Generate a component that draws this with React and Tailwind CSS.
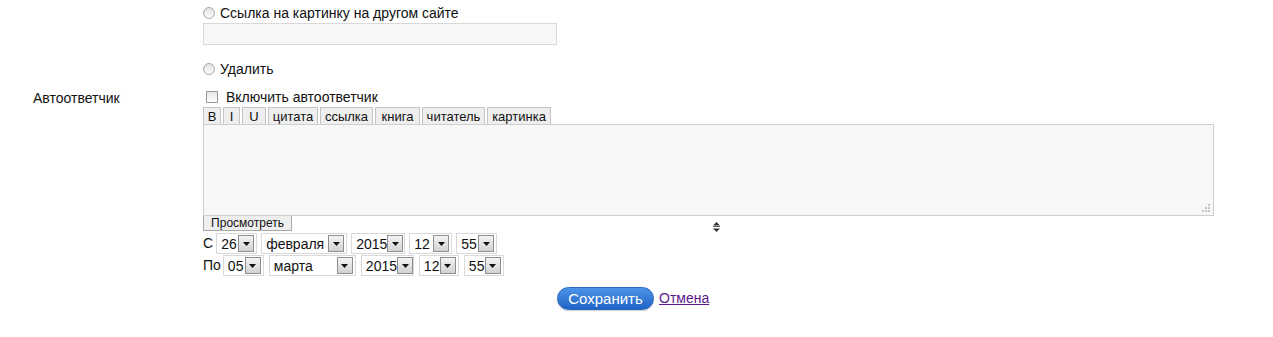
import React from 'react'

const Radio = () => (
    <span className="inline-block w-[12px] h-[12px] rounded-full border border-[#a8a8a8] bg-gradient-to-b from-[#e2e2e2] to-[#fdfdfd] mr-[5px] shrink-0" />
)

const Select = ({ value, width }) => (
    <span className="inline-flex items-center justify-between h-[21px] border border-[#d9d9d9] bg-white pl-[4px] pr-[2px] shrink-0" style={{ width }}>
        <span className="text-[14px] text-[#111] leading-none">{value}</span>
        <span className="w-[16px] h-[17px] shrink-0 border border-[#8e8e8e] bg-gradient-to-b from-[#f4f4f4] to-[#d2d2d2] flex items-center justify-center">
            <svg width="7" height="4" viewBox="0 0 7 4"><path d="M0 0h7L3.5 4z" fill="#111" /></svg>
        </span>
    </span>
)

const ToolBtn = ({ children, w }) => (
    <span className="h-[18px] border border-[#c4c4c4] bg-[#eeeeee] text-[13px] text-[#111] flex items-center justify-center leading-none shrink-0" style={{ width: w }}>
        {children}
    </span>
)

const App = () => {
    const tools = [
        ['B', 18], ['I', 17], ['U', 24], ['цитата', 50], ['ссылка', 53],
        ['книга', 45], ['читатель', 63], ['картинка', 64],
    ]
    return (
        <div className="w-[1273px] h-[337px] bg-white text-[14px] text-[#111] font-['Liberation_Sans',Arial,sans-serif] relative overflow-hidden">
            <div className="pl-[203px] pt-[5px]">
                <div className="flex items-center h-[16px]">
                    <Radio />
                    <span>Ссылка на картинку на другом сайте</span>
                </div>
                <div className="mt-[2px] w-[354px] h-[22px] border border-[#d9d9d9] bg-[#f7f7f7]" />
                <div className="flex items-center h-[16px] mt-[16px]">
                    <Radio />
                    <span>Удалить</span>
                </div>
            </div>

            {/* Автоответчик */}
            <div className="flex mt-[12px]">
                <div className="w-[203px] pl-[33px] text-[14px] leading-[18px]">Автоответчик</div>
                <div className="flex-1">
                    <div className="flex items-center h-[16px] pl-[3px]">
                        <span className="inline-block w-[12px] h-[12px] border border-[#9a9a9a] bg-gradient-to-b from-[#e8e8e8] to-[#fbfbfb] mr-[8px]" />
                        <span>Включить автоответчик</span>
                    </div>
                    <div className="flex gap-[2px] mt-[2px]">
                        {tools.map(([t, w]) => (
                            <ToolBtn key={t} w={w}>{t}</ToolBtn>
                        ))}
                    </div>
                    <div className="relative w-[1011px] h-[92px] border border-[#cfcfcf] bg-[#f8f8f8] -mt-[1px]">
                        <svg className="absolute right-[2px] bottom-[2px]" width="10" height="10" viewBox="0 0 10 10">
                            <rect x="7" y="1" width="2" height="2" fill="#c4c4c4" />
                            <rect x="4" y="4" width="2" height="2" fill="#c4c4c4" />
                            <rect x="7" y="4" width="2" height="2" fill="#c4c4c4" />
                            <rect x="1" y="7" width="2" height="2" fill="#c4c4c4" />
                            <rect x="4" y="7" width="2" height="2" fill="#c4c4c4" />
                            <rect x="7" y="7" width="2" height="2" fill="#c4c4c4" />
                        </svg>
                    </div>
                    <div className="flex items-start -mt-[2px]">
                        <span className="h-[17px] w-[89px] border border-[#a9a9a9] bg-[#eeeeee] text-[12px] flex items-center justify-center leading-none">Просмотреть</span>
                        <svg className="ml-[421px] mt-[8px]" width="7" height="10" viewBox="0 0 7 10">
                            <path d="M3.5 0L7 3.5H0z" fill="#333" />
                            <path d="M0 6.5h7L3.5 10z" fill="#333" />
                            <rect x="0" y="4" width="7" height="0.8" fill="#333" />
                        </svg>
                    </div>
                    <div className="flex items-center gap-[4px] mt-[1px] h-[21px]">
                        <span className="text-[14px] mr-[-1px]">С</span>
                        <Select value="26" width={41} />
                        <Select value="февраля" width={86} />
                        <Select value="2015" width={54} />
                        <Select value="12" width={43} />
                        <Select value="55" width={41} />
                    </div>
                    <div className="flex items-center gap-[5px] mt-[1px] h-[21px]">
                        <span className="text-[14px] mr-[-3px]">По</span>
                        <Select value="05" width={41} />
                        <Select value="марта" width={87} />
                        <Select value="2015" width={53} />
                        <Select value="12" width={40} />
                        <Select value="55" width={40} />
                    </div>
                </div>
            </div>

            <div className="flex items-center mt-[11px] pl-[557px]">
                <button className="w-[97px] h-[23px] rounded-full bg-gradient-to-b from-[#4d93e6] to-[#1f64c6] border border-[#2a68c0] text-white text-[15px] leading-none shadow-[0_1px_1px_rgba(0,0,0,0.2)]">
                    Сохранить
                </button>
                <a href="#" className="ml-[5px] text-[14px] text-[#5c1a8c] underline">Отмена</a>
            </div>
        </div>
    )
}

export default App
